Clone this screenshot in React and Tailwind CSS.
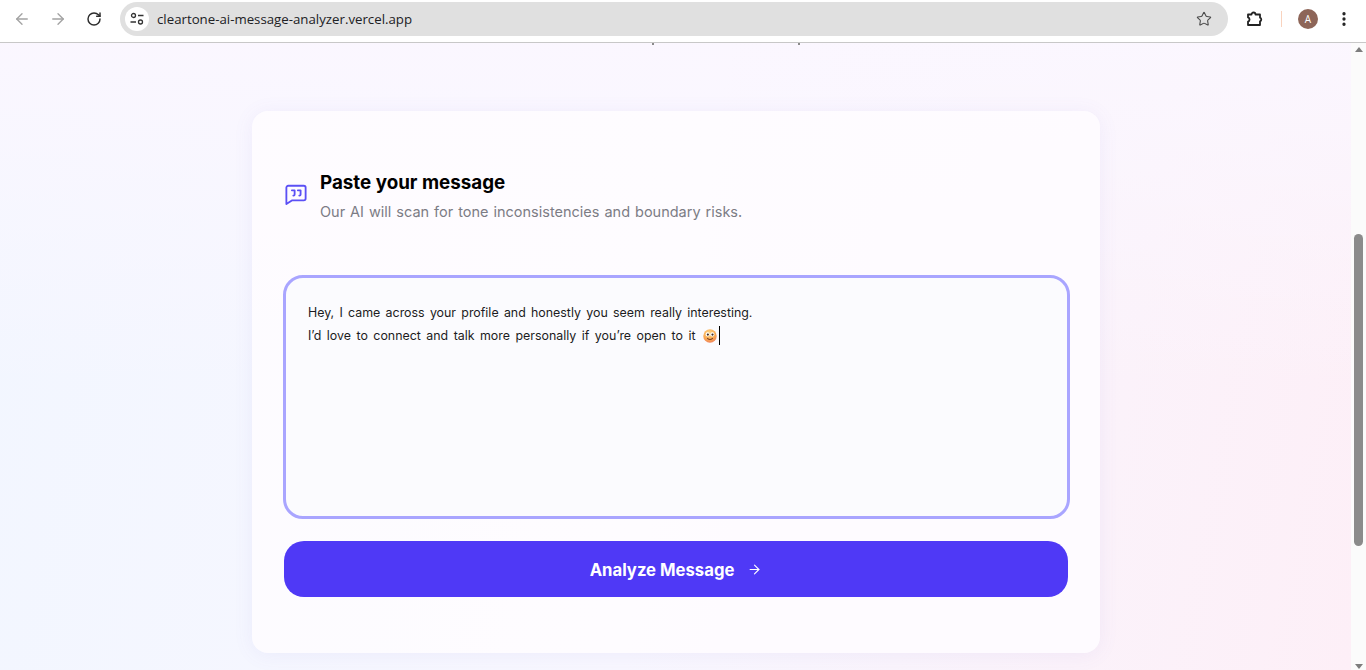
import { ArrowLeft, ArrowRight, RotateCw, Star, EllipsisVertical } from "lucide-react";

const BrowserBar = () => (
  <div className="flex h-[43px] shrink-0 items-start border-b border-[#c8c8c8] bg-white font-['Open_Sans',sans-serif]">
    <div className="flex h-[38px] items-center gap-[18px] pl-[13px]">
      <ArrowLeft size={18} strokeWidth={1.8} className="text-[#a3a3a3]" />
      <ArrowRight size={18} strokeWidth={1.8} className="text-[#a3a3a3]" />
      <RotateCw size={16} strokeWidth={2.2} className="ml-[1px] text-[#2c2c2c]" />
    </div>
    <div className="ml-[18px] mt-[2px] flex h-[34px] w-[1108px] items-center rounded-full bg-[#e0e0e0] pl-[5px] pr-[16px]">
      <div className="flex h-[24px] w-[24px] items-center justify-center rounded-full bg-white">
        <svg width="16" height="16" viewBox="0 0 16 16" fill="none" stroke="#333" strokeWidth="1.3">
          <circle cx="4.5" cy="4.5" r="2" />
          <path d="M9 4.5h5.5M1.5 11H7" />
          <circle cx="11.5" cy="11" r="2" />
        </svg>
      </div>
      <span className="ml-[8px] translate-y-[1px] text-[13.25px] text-[#202124]">cleartone-ai-message-analyzer.vercel.app</span>
      <Star size={16} strokeWidth={1.6} className="ml-auto text-[#4a4a4a]" />
    </div>
    <div className="flex h-[38px] items-center pl-[18px]">
      <svg width="18" height="18" viewBox="0 0 18 18" fill="none" stroke="#222" strokeWidth="1.8" strokeLinejoin="round">
        <path d="M2 4.5h3.5a2 2 0 0 1 4 0H14v3.2a1.9 1.9 0 0 1 0 3.6V15H2v-3.4a2.2 2.2 0 0 0 0-4.2z" />
      </svg>
      <div className="ml-[17px] h-[16px] w-[1px] bg-[#f9d3be]" />
      <div className="ml-[16px] flex h-[20px] w-[20px] items-center justify-center rounded-full bg-[#8d6558] text-[10px] text-white">A</div>
      <EllipsisVertical size={18} strokeWidth={2.4} className="ml-[17px] text-[#222]" />
    </div>
  </div>
);

const Scrollbar = () => (
  <div className="flex w-[15px] shrink-0 flex-col items-center bg-[#fbfbfb]">
    <div className="mt-[4px] h-0 w-0 border-x-[4px] border-b-[5px] border-x-transparent border-b-[#7d7d7d]" />
    <div className="mt-[182px] h-[312px] w-[9px] rounded-full bg-[#8b8b8b]" />
    <div className="mt-auto mb-[1px] h-0 w-0 border-x-[4px] border-t-[5px] border-x-transparent border-t-[#7d7d7d]" />
  </div>
);

const Emoji = () => (
  <svg width="14" height="14" viewBox="0 0 15 15" className="ml-[7px] shrink-0">
    <defs>
      <radialGradient id="face" cx="45%" cy="30%" r="75%">
        <stop offset="0%" stopColor="#fdd98a" />
        <stop offset="60%" stopColor="#f9aa52" />
        <stop offset="100%" stopColor="#ee7d5e" />
      </radialGradient>
    </defs>
    <circle cx="7.5" cy="7.5" r="7.2" fill="url(#face)" />
    <circle cx="5" cy="5.8" r="2.2" fill="#fff" />
    <circle cx="10" cy="5.8" r="2.2" fill="#fff" />
    <circle cx="5.2" cy="6" r="1.2" fill="#3f2c24" />
    <circle cx="10.2" cy="6" r="1.2" fill="#3f2c24" />
    <path d="M4.8 10c1.6 1.5 3.8 1.5 5.4 0" fill="none" stroke="#7d3f25" strokeWidth="1.1" strokeLinecap="round" />
  </svg>
);

const App = () => {
  return (
    <div className="flex h-[670px] w-[1366px] flex-col overflow-hidden font-['Inter',sans-serif]">
      <BrowserBar />
      <div className="flex min-h-0 flex-1">
        <main className="relative min-w-0 flex-1 bg-[linear-gradient(to_bottom,rgba(251,247,255,0.95),rgba(251,247,255,0)_55%),linear-gradient(100deg,#f2f6ff_0%,#f8f7ff_50%,#fdeff7_100%)] pl-[252px] pt-[68px]">
          {/* descenders of the line scrolled away behind the toolbar */}
          <span className="absolute left-[652px] top-0 h-[2px] w-[2px] bg-[#8a8a8a]" />
          <span className="absolute left-[798px] top-0 h-[2px] w-[2px] bg-[#8a8a8a]" />
          <section className="h-[542px] w-[848px] rounded-[16px] bg-[#fefcff]/90 px-[31px] pt-[59px] shadow-[0_2px_20px_rgba(120,100,200,0.08)]">
            <div className="flex items-start gap-[13px] pl-[2px]">
              <svg width="22" height="22" viewBox="0 0 24 24" fill="none" stroke="#5b50f5" strokeWidth="2" strokeLinecap="round" strokeLinejoin="round" className="mt-[13px] shrink-0">
                <path d="M3.5 3h17a2 2 0 0 1 2 2v12a2 2 0 0 1-2 2H7.5L1.5 23V5a2 2 0 0 1 2-2z" />
                <path d="M7.5 8h3v4.5c0 .8-.5 1.2-1.4 1.3M14 8h3v4.5c0 .8-.5 1.2-1.4 1.3" />
              </svg>
              <div>
                <h2 className="text-[18.8px] leading-[26px] font-bold text-black">Paste your message</h2>
                <p className="mt-[4px] text-[14.5px] leading-[24px] text-[#7c7c85] [word-spacing:0.9px]">Our AI will scan for tone inconsistencies and boundary risks.</p>
              </div>
            </div>
            <div className="mt-[51px] h-[244px] w-[787px] rounded-[20px] border-[3px] border-[#a9a5ff] bg-[#fbfbfe] px-[22px] pt-[23px] text-[12.4px] leading-[23px] text-[#1c1c22]">
              <p className="[word-spacing:1.8px]">Hey, I came across your profile and honestly you seem really interesting.</p>
              <p className="flex items-center [word-spacing:2px]">
                I’d love to connect and talk more personally if you’re open to it
                <Emoji />
                <span className="ml-[2px] inline-block h-[19px] w-[1px] bg-black" />
              </p>
            </div>
            <button className="ml-[1px] mt-[22px] flex h-[56px] w-[784px] items-center justify-center gap-[13px] rounded-[20px] bg-[#4f39f6] text-[16.7px] font-bold text-white">
              <span className="translate-y-[2px]">Analyze Message</span>
              <ArrowRight size={15} strokeWidth={1.8} />
            </button>
          </section>
        </main>
        <Scrollbar />
      </div>
    </div>
  );
};

export default App;
